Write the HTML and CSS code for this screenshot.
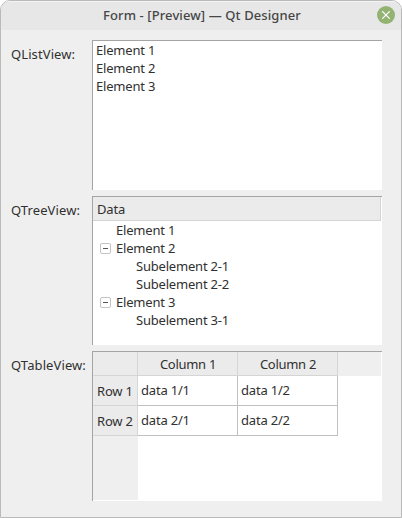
FILE: index.html
```html
<!DOCTYPE html>
<html lang="en">
<head>
<meta charset="utf-8">
<title>Form - [Preview] — Qt Designer</title>
<link rel="stylesheet" href="styles.css">
</head>
<body>
<div class="window">
  <header class="titlebar">
    <span class="title">Form - [Preview] — Qt Designer</span>
    <svg class="close" viewBox="0 0 18 18"><circle cx="9" cy="9" r="9" fill="#92b372"/><path d="M5.6 5.6l6.8 6.8M12.4 5.6l-6.8 6.8" stroke="#fff" stroke-width="1.3" stroke-linecap="round"/></svg>
  </header>
  <main class="form">
    <div class="label">QListView:</div>
    <ul class="view list">
      <li>Element 1</li><li>Element 2</li><li>Element 3</li>
    </ul>
    <div class="label">QTreeView:</div>
    <div class="view">
      <div class="tree-header">Data</div>
      <ul class="tree">
        <li>Element 1</li>
        <li class="parent"><span class="toggle"></span>Element 2</li>
        <li class="child">Subelement 2-1</li>
        <li class="child">Subelement 2-2</li>
        <li class="parent"><span class="toggle"></span>Element 3</li>
        <li class="child">Subelement 3-1</li>
      </ul>
    </div>
    <div class="label">QTableView:</div>
    <div class="view table">
      <div class="head corner"></div><div class="head">Column 1</div><div class="head">Column 2</div><div class="head rest"></div>
      <div class="row-head">Row 1</div><div class="cell">data 1/1</div><div class="cell">data 1/2</div><div></div>
      <div class="row-head">Row 2</div><div class="cell">data 2/1</div><div class="cell">data 2/2</div><div></div>
      <div class="row-rest"></div>
    </div>
  </main>
</div>
</body>
</html>
```
FILE: styles.css
```css
* { box-sizing: border-box; }
body { margin: 0; background: #fff; }
ul { list-style: none; margin: 0; padding: 0; }
.window {
  width: 402px; height: 518px; overflow: hidden;
  border: 1px solid #bababa; border-radius: 10px 10px 0 0;
  background: #efefef; color: #303030;
  font: 13px/18px "Noto Sans", sans-serif; letter-spacing: -0.2px;
  white-space: nowrap;
}
.titlebar {
  display: grid; grid-template-columns: 1fr 18px;
  height: 29px; padding: 5px 6px 0; background: #e7e7e7;
  box-shadow: inset 0 1px #f4f4f4;
}
.title { padding-left: 20px; text-align: center; font-weight: 500; color: #464646; letter-spacing: 0.1px; }
.close { display: block; width: 18px; height: 18px; }
.form {
  display: grid; grid-template-columns: 81px 290px;
  grid-template-rows: 150px 149px 150px; row-gap: 6px;
  padding: 10px 0 0 10px;
}
.label { padding-top: 5px; letter-spacing: 0.1px; }
.view { background: #fff; border: solid #a4a4a4; border-width: 1px 0 0 1px; }
.list { padding: 0 3px; }
.tree-header {
  height: 24px; margin-right: 1px; padding: 4px 0 0 4px; line-height: 17px;
  background: #ebebeb; border: solid #d5d5d5; border-width: 0 1px 1px 0;
}
.tree li { display: flex; align-items: center; height: 18px; padding-left: 23px; }
.tree .parent { padding-left: 7px; }
.tree .child { padding-left: 43px; }
.toggle {
  display: grid; place-items: center; width: 11px; height: 11px; margin-right: 5px;
  border: 1px solid #c4c4c4; border-radius: 2px;
}
.toggle::before { content: ""; width: 5px; height: 1px; background: #555; }
.table {
  display: grid; grid-template-columns: 45px 100px 100px 43px;
  grid-template-rows: 24px 30px 30px 64px;
}
.head {
  display: grid; place-items: center; padding-left: 1px; background: #ebebeb;
  border: solid #d5d5d5; border-width: 0 1px 1px 0; letter-spacing: -0.3px;
}
.rest { background: #efefef; border-color: #efefef; }
.row-head {
  padding: 6px 0 0 4px; background: #ebebeb;
  border: solid #d5d5d5; border-width: 0 1px 1px 0;
}
.cell { padding: 5px 0 0 3px; border: solid #c0c0c0; border-width: 0 1px 1px 0; }
.row-rest { background: #efefef; }
```
